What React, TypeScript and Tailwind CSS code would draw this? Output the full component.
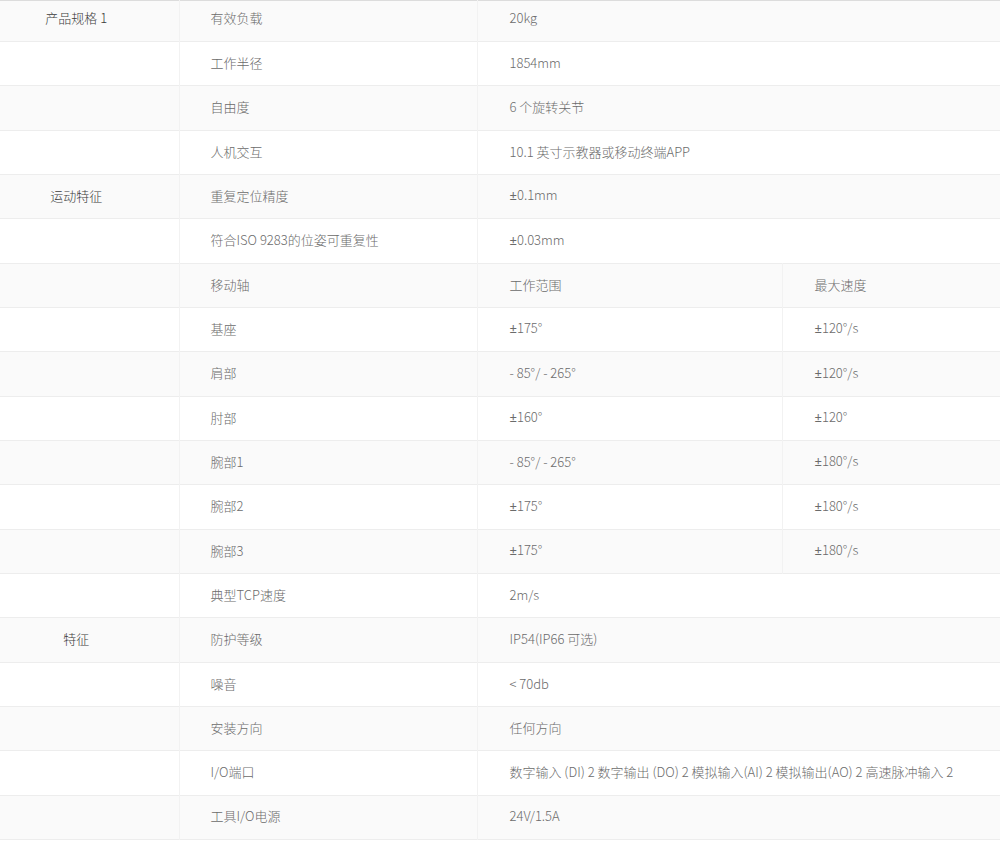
import React from 'react';

type Row = {
  group?: string;
  name: string;
  value: string;
  extra?: string;
};

const rows: Row[] = [
  { group: '产品规格 1', name: '有效负载', value: '20kg' },
  { name: '工作半径', value: '1854mm' },
  { name: '自由度', value: '6 个旋转关节' },
  { name: '人机交互', value: '10.1 英寸示教器或移动终端APP' },
  { group: '运动特征', name: '重复定位精度', value: '±0.1mm' },
  { name: '符合ISO 9283的位姿可重复性', value: '±0.03mm' },
  { name: '移动轴', value: '工作范围', extra: '最大速度' },
  { name: '基座', value: '±175°', extra: '±120°/s' },
  { name: '肩部', value: '- 85°/ - 265°', extra: '±120°/s' },
  { name: '肘部', value: '±160°', extra: '±120°' },
  { name: '腕部1', value: '- 85°/ - 265°', extra: '±180°/s' },
  { name: '腕部2', value: '±175°', extra: '±180°/s' },
  { name: '腕部3', value: '±175°', extra: '±180°/s' },
  { name: '典型TCP速度', value: '2m/s' },
  { group: '特征', name: '防护等级', value: 'IP54(IP66 可选)' },
  { name: '噪音', value: '< 70db' },
  { name: '安装方向', value: '任何方向' },
  { name: 'I/O端口', value: '数字输入 (DI) 2 数字输出 (DO) 2 模拟输入(AI) 2 模拟输出(AO) 2 高速脉冲输入 2' },
  { name: '工具I/O电源', value: '24V/1.5A' },
];

// the CJK face draws ± full width, so give it a latin face
const Cell: React.FC<{ text: string }> = ({ text }) => {
  if (!text.startsWith('±')) return <>{text}</>;
  return (
    <>
      <span className="font-['Noto_Sans'] font-normal">±</span>
      {text.slice(1)}
    </>
  );
};

const SpecTable: React.FC = () => {
  return (
    <div className="w-full overflow-hidden bg-white">
      <table
        className="w-full table-fixed border-collapse text-[13px] font-light text-[#6b6b6b]"
        style={{ fontFamily: '"Noto Sans CJK SC", "Noto Sans", sans-serif' }}
      >
        <colgroup>
          <col className="w-[179px]" />
          <col className="w-[298px]" />
          <col className="w-[305px]" />
          <col />
        </colgroup>
        <tbody>
          {rows.map((row, idx) => {
            const striped = idx % 2 === 0;
            const first = idx === 0;
            const pad = first ? 'pb-[7px]' : 'pb-[2px]';
            return (
              <tr
                key={row.name}
                className={`${striped ? 'bg-[#fafafa]' : 'bg-white'} ${
                  first ? 'h-[41px] border-t border-t-[#dcdcdc]' : 'h-[44.33px]'
                } border-b border-b-[#ededed]`}
              >
                <td className={`border-r border-r-[#f2f2f2] pr-[26px] text-center align-middle text-[#3a3a3a] ${pad}`}>
                  {row.group}
                </td>
                <td className={`border-r border-r-[#f2f2f2] pl-[31px] align-middle whitespace-nowrap ${pad}`}>
                  {row.name}
                </td>
                {row.extra ? (
                  <>
                    <td className={`border-r border-r-[#f2f2f2] pl-[32px] align-middle ${pad}`}>
                      <Cell text={row.value} />
                    </td>
                    <td className={`pl-[32px] align-middle ${pad}`}>
                      <Cell text={row.extra} />
                    </td>
                  </>
                ) : (
                  <td colSpan={2} className={`pl-[32px] align-middle whitespace-nowrap ${pad}`}>
                    <Cell text={row.value} />
                  </td>
                )}
              </tr>
            );
          })}
        </tbody>
      </table>
    </div>
  );
};

export default function App() {
  return <SpecTable />;
}
